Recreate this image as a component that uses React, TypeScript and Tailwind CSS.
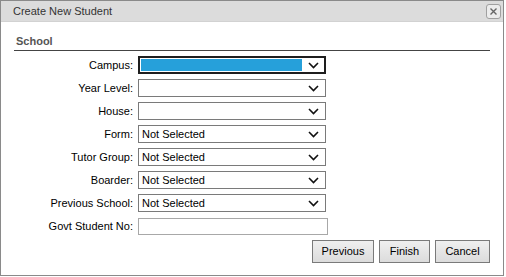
import React from "react";

function Chevron() {
  return (
    <svg width="11" height="7" viewBox="0 0 11 7" className="shrink-0">
      <path d="M1 1 L5.5 5.5 L10 1" fill="none" stroke="#111" strokeWidth="1.6" />
    </svg>
  );
}

function Select({ value, focused }: { value?: string; focused?: boolean }) {
  if (focused) {
    return (
      <div className="flex h-[18px] w-[188px] items-center border-2 border-[#1e1e1e] bg-white pl-[1px] pr-[5px]">
        <div className="h-[12px] flex-1 bg-[#26a0da]" />
        <div className="ml-[6px]">
          <Chevron />
        </div>
      </div>
    );
  }
  return (
    <div className="flex h-[18px] w-[188px] items-center border border-[#7a7a7a] bg-white pl-[3px] pr-[6px]">
      <span className="flex-1 text-[11px] leading-none text-black">{value}</span>
      <Chevron />
    </div>
  );
}

const rows: { label: string; value?: string; focused?: boolean }[] = [
  { label: "Campus:", focused: true },
  { label: "Year Level:" },
  { label: "House:" },
  { label: "Form:", value: "Not Selected" },
  { label: "Tutor Group:", value: "Not Selected" },
  { label: "Boarder:", value: "Not Selected" },
  { label: "Previous School:", value: "Not Selected" },
];

const buttons = [
  { text: "Previous", w: "w-[62px]" },
  { text: "Finish", w: "w-[51px]" },
  { text: "Cancel", w: "w-[55px]" },
];

export default function App() {
  return (
    <div className="h-[277px] w-[506px] bg-white" style={{ fontFamily: '"Liberation Sans", Arial, sans-serif' }}>
      <div className="flex h-[276px] w-[504px] flex-col border border-[#8a8a8a]">
        {/* title bar */}
        <div className="flex h-[21px] items-center justify-between border-b border-[#d2d2d2] bg-[#dcdcdc] pl-[12px] pr-[2px]">
          <span className="text-[11px] leading-[14px] text-[#333]">Create New Student</span>
          <div className="flex h-[15px] w-[15px] items-center justify-center rounded-[3px] border border-[#a0a0a0] bg-[#ececec]">
            <svg width="7" height="7" viewBox="0 0 7 7">
              <path d="M0.5 0.5 L6.5 6.5 M6.5 0.5 L0.5 6.5" stroke="#666" strokeWidth="1.4" />
            </svg>
          </div>
        </div>

        <div className="mx-[13px] mt-[11px] border-b border-[#444] pb-[2px] pl-[2px] leading-[14px]">
          <span className="text-[11px] font-bold text-[#555]">School</span>
        </div>

        <div className="mt-[5px] flex flex-col gap-[5px]">
          {rows.map((r) => (
            <div key={r.label} className="flex h-[18px] items-center">
              <label className="w-[132px] text-right text-[11px] leading-[14px] text-black">{r.label}</label>
              <div className="ml-[5px]">
                <Select value={r.value} focused={r.focused} />
              </div>
            </div>
          ))}
          <div className="flex h-[18px] items-center">
            <label className="w-[132px] text-right text-[11px] leading-[14px] text-black">Govt Student No:</label>
            <div className="ml-[5px] h-[17px] w-[190px] border border-[#a8a8a8] bg-white" />
          </div>
        </div>

        <div className="mt-[5px] flex justify-end gap-[5px] pr-[13px]">
          {buttons.map((b) => (
            <button
              key={b.text}
              className={`${b.w} h-[23px] border border-[#7a7a7a] bg-gradient-to-b from-[#efefef] to-[#dcdcdc] text-[11px] text-black`}
            >
              {b.text}
            </button>
          ))}
        </div>
      </div>
    </div>
  );
}
